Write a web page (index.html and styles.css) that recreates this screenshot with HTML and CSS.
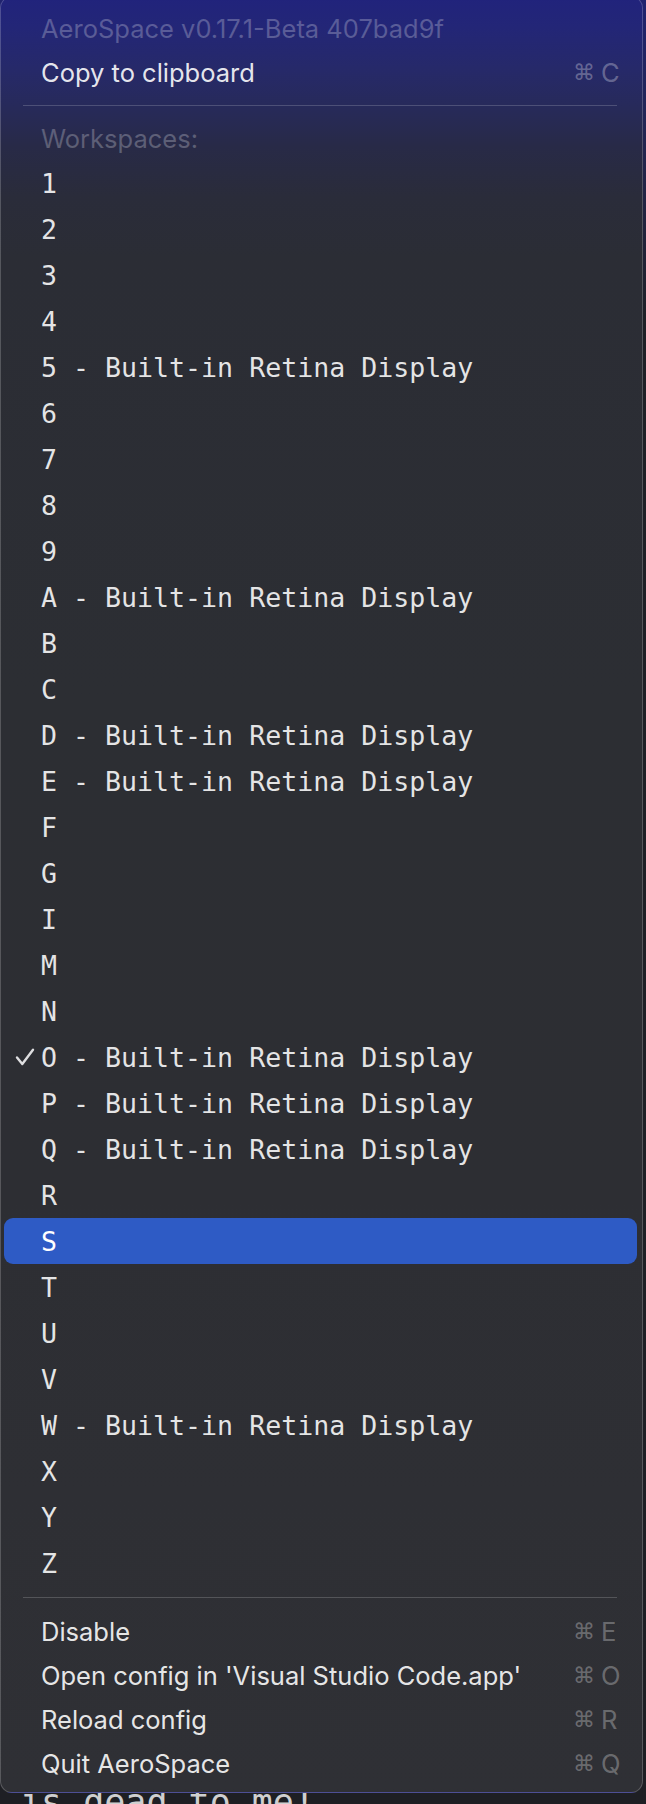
FILE: index.html
```html
<!DOCTYPE html>
<html>
<head>
<meta charset="utf-8">
<link rel="stylesheet" href="styles.css">
</head>
<body>
<div class="menu">
  <div class="row label-row header"><span class="mark"></span><span class="text">AeroSpace v0.17.1-Beta 407bad9f</span></div>
  <div class="row item"><span class="mark"></span><span class="text">Copy to clipboard</span><span class="sc"><span class="cmd">⌘</span><span class="key">C</span></span></div>
  <div class="sep"></div>
  <div class="row label-row wshead"><span class="mark"></span><span class="text">Workspaces:</span></div>
  <div class="ws-list">
    <div class="ws"><span class="mark"></span><span class="text">1</span></div>
    <div class="ws"><span class="mark"></span><span class="text">2</span></div>
    <div class="ws"><span class="mark"></span><span class="text">3</span></div>
    <div class="ws"><span class="mark"></span><span class="text">4</span></div>
    <div class="ws"><span class="mark"></span><span class="text">5 - Built-in Retina Display</span></div>
    <div class="ws"><span class="mark"></span><span class="text">6</span></div>
    <div class="ws"><span class="mark"></span><span class="text">7</span></div>
    <div class="ws"><span class="mark"></span><span class="text">8</span></div>
    <div class="ws"><span class="mark"></span><span class="text">9</span></div>
    <div class="ws"><span class="mark"></span><span class="text">A - Built-in Retina Display</span></div>
    <div class="ws"><span class="mark"></span><span class="text">B</span></div>
    <div class="ws"><span class="mark"></span><span class="text">C</span></div>
    <div class="ws"><span class="mark"></span><span class="text">D - Built-in Retina Display</span></div>
    <div class="ws"><span class="mark"></span><span class="text">E - Built-in Retina Display</span></div>
    <div class="ws"><span class="mark"></span><span class="text">F</span></div>
    <div class="ws"><span class="mark"></span><span class="text">G</span></div>
    <div class="ws"><span class="mark"></span><span class="text">I</span></div>
    <div class="ws"><span class="mark"></span><span class="text">M</span></div>
    <div class="ws"><span class="mark"></span><span class="text">N</span></div>
    <div class="ws"><span class="mark"><svg class="check" width="20" height="18" viewBox="0 0 20 18"><polyline points="2,9.5 7.3,16 18,1.8" fill="none" stroke="#dedee0" stroke-width="2.4" stroke-linecap="round" stroke-linejoin="round"/></svg></span><span class="text">O - Built-in Retina Display</span></div>
    <div class="ws"><span class="mark"></span><span class="text">P - Built-in Retina Display</span></div>
    <div class="ws"><span class="mark"></span><span class="text">Q - Built-in Retina Display</span></div>
    <div class="ws"><span class="mark"></span><span class="text">R</span></div>
    <div class="ws selected"><span class="mark"></span><span class="text">S</span></div>
    <div class="ws"><span class="mark"></span><span class="text">T</span></div>
    <div class="ws"><span class="mark"></span><span class="text">U</span></div>
    <div class="ws"><span class="mark"></span><span class="text">V</span></div>
    <div class="ws"><span class="mark"></span><span class="text">W - Built-in Retina Display</span></div>
    <div class="ws"><span class="mark"></span><span class="text">X</span></div>
    <div class="ws"><span class="mark"></span><span class="text">Y</span></div>
    <div class="ws"><span class="mark"></span><span class="text">Z</span></div>
  </div>
  <div class="sep"></div>
  <div class="row item"><span class="mark"></span><span class="text">Disable</span><span class="sc"><span class="cmd">⌘</span><span class="key">E</span></span></div>
  <div class="row item"><span class="mark"></span><span class="text">Open config in 'Visual Studio Code.app'</span><span class="sc"><span class="cmd">⌘</span><span class="key">O</span></span></div>
  <div class="row item"><span class="mark"></span><span class="text">Reload config</span><span class="sc"><span class="cmd">⌘</span><span class="key">R</span></span></div>
  <div class="row item"><span class="mark"></span><span class="text">Quit AeroSpace</span><span class="sc"><span class="cmd">⌘</span><span class="key">Q</span></span></div>
</div>
<div class="behind">is dead to me!</div>
</body>
</html>
```
FILE: styles.css
```css
html, body {
  margin: 0;
  padding: 0;
}
html {
  overflow: hidden;
}
body {
  width: 646px;
  height: 1804px;
  overflow: hidden;
  background: linear-gradient(180deg, #20236f 0px, #23264f 150px, #1f2127 320px, #1e1f24 100%);
  font-family: Inter, "Liberation Sans", sans-serif;
}
.menu {
  position: relative;
  z-index: 1;
  box-sizing: border-box;
  width: 643px;
  margin-top: -4px;
  padding: 9px 0 7px 0;
  border: 1px solid rgba(255, 255, 255, 0.2);
  border-radius: 12px;
  background: linear-gradient(180deg, #21237c 0px, #232677 30px, #26296a 70px, #272a5a 110px, #282a47 150px, #2a2c3a 200px, #2b2d35 260px, #2c2e33 700px, #2d2e33 1200px, #2f3035 100%);
}
.row {
  display: flex;
  align-items: center;
  height: 44px;
  margin: 0 5px 0 3px;
  padding: 0 14px 0 11px;
  font-size: 25.5px;
  color: rgba(255, 255, 255, 0.9);
  white-space: nowrap;
}
.mark {
  flex: 0 0 26px;
  display: flex;
  align-items: center;
}
.text {
  flex: 1;
}
.header {
  color: rgba(255, 255, 255, 0.25);
}
.wshead {
  height: 43px;
  color: rgba(255, 255, 255, 0.25);
}
.sc {
  flex: 0 0 50px;
  display: flex;
  align-items: center;
  color: rgba(255, 255, 255, 0.3);
}
.cmd {
  font-family: "DejaVu Sans", sans-serif;
  font-size: 22px;
  width: 28px;
}
.key {
  font-size: 25.5px;
}
.sep {
  height: 23px;
  display: flex;
  flex-direction: column;
  padding: 0 25px 0 22px;
}
.sep::before {
  content: "";
  display: block;
  margin-top: 11px;
  height: 1px;
  background: rgba(255, 255, 255, 0.18);
}
.ws {
  display: flex;
  align-items: center;
  height: 46px;
  margin: 0 5px 0 3px;
  padding: 0 14px 0 11px;
  font-family: "DejaVu Sans Mono", "Liberation Mono", monospace;
  font-size: 26.6px;
  color: rgba(255, 255, 255, 0.88);
  white-space: pre;
  border-radius: 9px;
}
.ws.selected {
  background: #2e5bc5;
  color: #ffffff;
}
.check {
  display: block;
}
.behind {
  margin-top: -8px;
  padding-left: 20px;
  font-family: "DejaVu Sans Mono", "Liberation Mono", monospace;
  font-size: 35px;
  line-height: 35px;
  color: #cfcfd0;
  white-space: pre;
}
```
